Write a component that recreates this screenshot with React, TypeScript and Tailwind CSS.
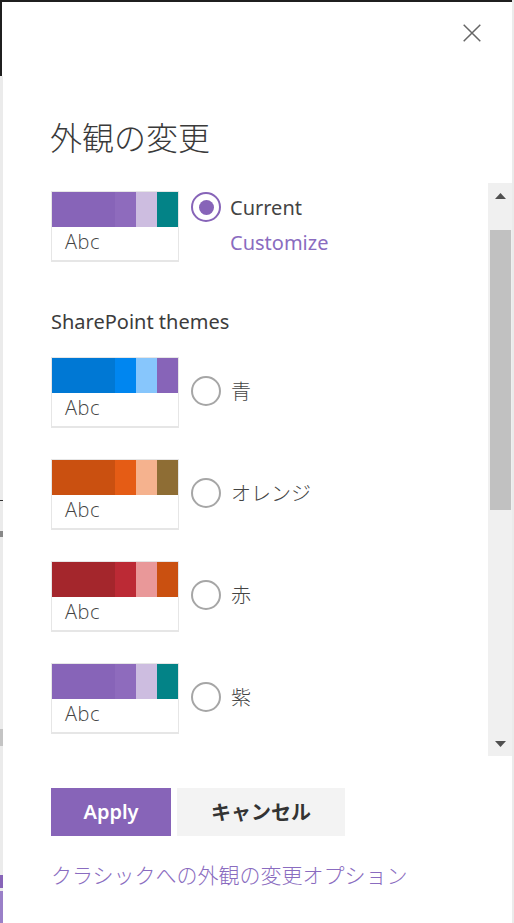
import React from "react";

type Theme = { label: string; colors: string[] };

const themes: Theme[] = [
  { label: "青", colors: ["bg-[#0078d4]", "bg-[#0086f0]", "bg-[#87c6fc]", "bg-[#8764b8]"] },
  { label: "オレンジ", colors: ["bg-[#ca5010]", "bg-[#e55c15]", "bg-[#f5b28e]", "bg-[#8e6d34]"] },
  { label: "赤", colors: ["bg-[#a4262c]", "bg-[#bc2a35]", "bg-[#e99899]", "bg-[#ca5010]"] },
  { label: "紫", colors: ["bg-[#8764b8]", "bg-[#8e6bbd]", "bg-[#cdbde0]", "bg-[#038387]"] },
];

const widths = ["w-[63px]", "w-[21px]", "w-[21px]", "w-[21px]"];

function Swatch({ colors }: { colors: string[] }) {
  return (
    <div className="w-[128px] h-[71px] border border-b-2 border-[#e6e6e6] flex flex-col shrink-0">
      <div className="h-[35px] flex">
        {colors.map((c, i) => (
          <div key={i} className={`${widths[i]} h-full ${c}`} />
        ))}
      </div>
      <div className="flex-1 pl-[13px] pb-[3px] flex items-center text-[20px] font-light tracking-[0.5px] text-[#444] leading-none font-['Open_Sans',sans-serif]">
        Abc
      </div>
    </div>
  );
}

function Radio({ checked }: { checked?: boolean }) {
  return (
    <div
      className={
        checked
          ? "w-[30px] h-[30px] rounded-full border-2 border-[#8764b8] flex items-center justify-center shrink-0"
          : "w-[30px] h-[30px] rounded-full border-2 border-[#a6a6a6] flex items-center justify-center shrink-0"
      }
    >
      {checked && <div className="w-[15px] h-[15px] rounded-full bg-[#8764b8]" />}
    </div>
  );
}

export default function App() {
  return (
    <div className="w-[514px] h-[923px] flex flex-col bg-white overflow-hidden font-['Noto_Sans','Noto_Sans_CJK_JP',sans-serif] text-[#333]">
      <div className="h-[2px] flex shrink-0">
        <div className="w-[512px] bg-[#1f1f1f]" />
        <div className="flex-1 bg-[#ebebeb]" />
      </div>
      <div className="flex-1 flex min-h-0">
        {/* left edge */}
        <div className="w-[3px] flex flex-col shrink-0">
          <div className="h-[74px] flex">
            <div className="w-[2px] bg-[#1f1f1f]" />
            <div className="w-[1px] bg-white" />
          </div>
          <div className="h-[424px] bg-[#ebebeb]" />
          <div className="h-[1px] bg-[#333]" />
          <div className="h-[30px] bg-[#ebebeb]" />
          <div className="h-[6px] bg-[#888]" />
          <div className="h-[192px] bg-[#ebebeb]" />
          <div className="h-[17px] bg-[#c4c4c4]" />
          <div className="h-[129px] bg-[#ebebeb]" />
          <div className="h-[13px] bg-[#8764b8]" />
          <div className="h-[3px] bg-[#ebebeb]" />
          <div className="flex-1 bg-[#9a80c8]" />
        </div>

        {/* panel */}
        <div className="flex-1 flex flex-col min-w-0">
          {/* header */}
          <div className="h-[181px] flex flex-col shrink-0">
            <div className="pt-[22px] pr-[31px] flex justify-end">
              <svg width="18" height="18" viewBox="0 0 18 18" fill="none">
                <path d="M0.7 0.7 L17.3 17.3 M17.3 0.7 L0.7 17.3" stroke="#666" strokeWidth="1.5" />
              </svg>
            </div>
            <div className="mt-[74px] pl-[47px] h-[40px] flex items-center text-[32px] font-light leading-none text-[#3a3a3a] font-['Noto_Sans_CJK_JP',sans-serif]">
              外観の変更
            </div>
          </div>

          {/* scroll region */}
          <div className="h-[573px] flex shrink-0">
            <div className="flex-1 overflow-hidden pl-[48px] pt-[8px]">
              <div className="flex items-start">
                <Swatch colors={["bg-[#8764b8]", "bg-[#8e6bbd]", "bg-[#cdbde0]", "bg-[#038387]"]} />
                <div className="ml-[12px] mt-[1px] flex flex-col">
                  <div className="flex items-center gap-[9px] h-[30px]">
                    <Radio checked />
                    <span className="text-[20px] leading-[30px] text-[#444] mt-[2px]">Current</span>
                  </div>
                  <div className="ml-[39px] mt-[6px] text-[20px] leading-[30px] text-[#8a6cc0]">Customize</div>
                </div>
              </div>
              <div className="mt-[45px] text-[20px] leading-[30px] text-[#3c3c3c]">SharePoint themes</div>
              <div className="mt-[20px] flex flex-col gap-[31px]">
                {themes.map((t) => (
                  <div key={t.label} className="flex items-start">
                    <Swatch colors={t.colors} />
                    <div className="ml-[12px] mt-[19px] flex items-center gap-[10px] h-[30px]">
                      <Radio />
                      <span className="text-[20px] leading-[30px] text-[#444] font-light font-['Noto_Sans_CJK_JP',sans-serif]">
                        {t.label}
                      </span>
                    </div>
                  </div>
                ))}
              </div>
            </div>
            {/* scrollbar */}
            <div className="w-[24px] bg-[#f0f0f0] flex flex-col shrink-0">
              <div className="h-[25px] flex items-center justify-center">
                <svg width="11" height="6" viewBox="0 0 11 6">
                  <path d="M5.5 0 L11 6 L0 6 Z" fill="#505050" />
                </svg>
              </div>
              <div className="mt-[22px] ml-[2px] w-[21px] h-[280px] bg-[#c1c1c1]" />
              <div className="flex-1" />
              <div className="h-[25px] flex items-center justify-center">
                <svg width="11" height="6" viewBox="0 0 11 6">
                  <path d="M0 0 L11 0 L5.5 6 Z" fill="#505050" />
                </svg>
              </div>
            </div>
          </div>

          {/* footer */}
          <div className="flex-1 pl-[48px] pt-[32px] flex flex-col">
            <div className="flex gap-[6px]">
              <button className="w-[120px] h-[48px] bg-[#8764b8] text-white text-[20px] font-semibold leading-none flex items-center justify-center">
                Apply
              </button>
              <button className="w-[168px] h-[48px] bg-[#f3f3f3] text-[#333] text-[20px] font-bold leading-none flex items-center justify-center font-['Noto_Sans_CJK_JP',sans-serif]">
                キャンセル
              </button>
            </div>
            <div className="mt-[23px] text-[21px] leading-[30px] text-[#8a6cc0] font-light font-['Noto_Sans_CJK_JP',sans-serif] whitespace-nowrap">
              クラシックへの外観の変更オプション
            </div>
          </div>
        </div>

        {/* right edge */}
        <div className="w-[2px] bg-[#ebebeb] shrink-0" />
      </div>
    </div>
  );
}
